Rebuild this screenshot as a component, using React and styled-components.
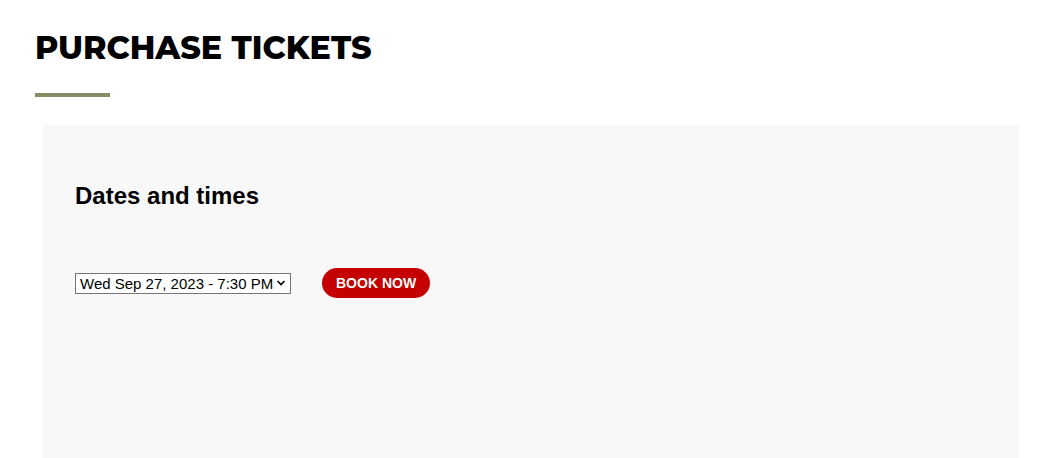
import React from "react";
import styled, { createGlobalStyle } from "styled-components";

const Global = createGlobalStyle`
  html, body { margin: 0; padding: 0; background: #fff; }
  body { font-family: "Liberation Sans", Arial, sans-serif; color: #000; }
`;

const Page = styled.div`
  padding: 28px 29px 0 35px;
  height: 458px;
  box-sizing: border-box;
  overflow: hidden;
  display: flex;
  flex-direction: column;
`;

const Title = styled.h1`
  margin: 0;
  font-family: "Montserrat", Inter, "Open Sans", sans-serif;
  font-weight: 800;
  font-size: 31.8px;
  line-height: 40px;
  letter-spacing: 0px;
  text-transform: uppercase;
`;

const Rule = styled.div`
  width: 75px;
  height: 4px;
  background: #878c64;
  margin-top: 25px;
`;

const Panel = styled.section`
  margin: 28px 0 0 8px;
  flex: 1;
  background: #f8f8f8;
  padding: 57px 32px 0;
`;

const Heading = styled.h2`
  margin: 0;
  font-family: "Liberation Sans", Arial, sans-serif;
  font-weight: 700;
  font-size: 24px;
  line-height: 28px;
`;

const Row = styled.div`
  display: flex;
  align-items: center;
  gap: 31px;
  margin-top: 58px;
`;

const SelectWrap = styled.div`
  position: relative;
  width: 216px;
  height: 21px;
`;

const Select = styled.select`
  appearance: none;
  -webkit-appearance: none;
  width: 100%;
  height: 100%;
  box-sizing: border-box;
  border: 1px solid #767676;
  border-radius: 0;
  background: #fff;
  color: #000;
  font-family: "Liberation Sans", Arial, sans-serif;
  font-size: 15px;
  padding: 0 0 0 4px;
  line-height: 19px;
  outline: none;
`;

const Chevron = styled.svg`
  position: absolute;
  right: 5px;
  top: 6px;
  width: 10px;
  height: 8px;
  pointer-events: none;
`;

const BookButton = styled.button`
  height: 30px;
  padding: 0 14px;
  border: none;
  border-radius: 15px;
  background: #c40000;
  color: #fff;
  font-family: "Liberation Sans", Arial, sans-serif;
  font-weight: 700;
  font-size: 14px;
  letter-spacing: 0;
  text-transform: uppercase;
  cursor: pointer;
`;

export default function App() {
  return (
    <>
      <Global />
      <Page>
        <Title>Purchase Tickets</Title>
        <Rule />
        <Panel>
          <Heading>Dates and times</Heading>
          <Row>
            <SelectWrap>
              <Select defaultValue="1">
                <option value="1">Wed Sep 27, 2023 - 7:30 PM</option>
              </Select>
              <Chevron viewBox="0 0 10 8">
                <path d="M1.5 2 L5 5.5 L8.5 2" fill="none" stroke="#000" strokeWidth="1.6" />
              </Chevron>
            </SelectWrap>
            <BookButton>Book Now</BookButton>
          </Row>
        </Panel>
      </Page>
    </>
  );
}
